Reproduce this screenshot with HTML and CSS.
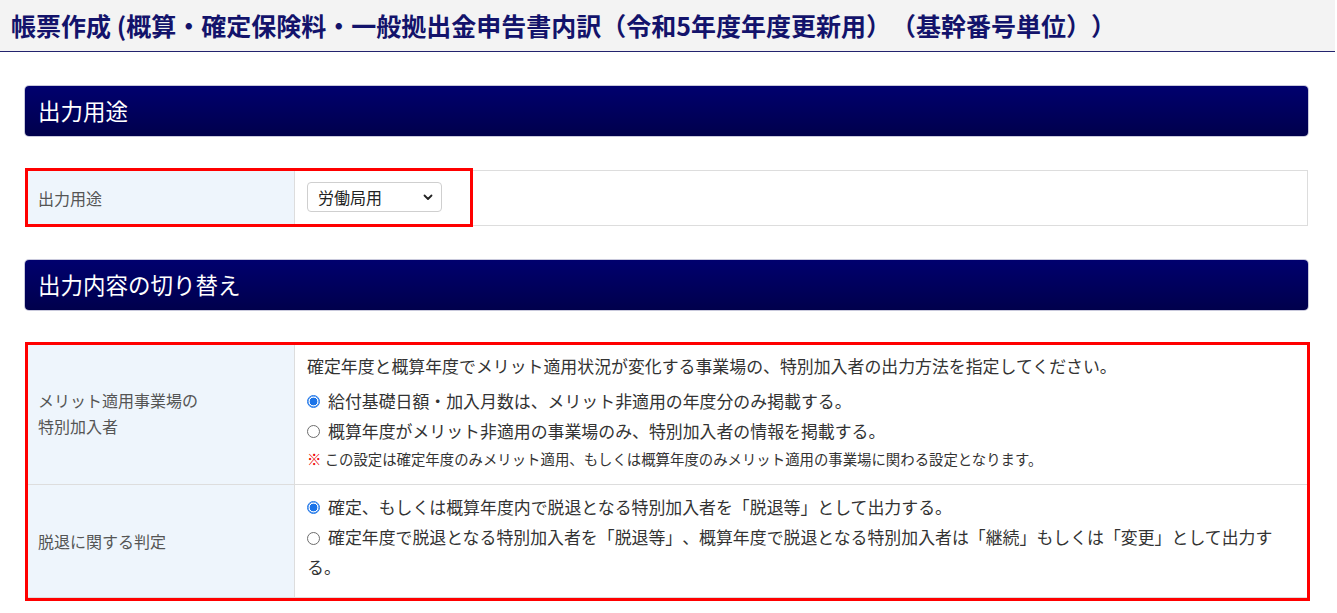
FILE: index.html
```html
<!DOCTYPE html>
<html lang="ja">
<head>
<meta charset="utf-8">
<title>帳票作成</title>
<link rel="stylesheet" href="styles.css">
</head>
<body>
<header class="page-header">
  <h1 class="page-title">帳票作成 (概算・確定保険料・一般拠出金申告書内訳（令和5年度年度更新用）（基幹番号単位））</h1>
</header>
<main class="content">
  <h2 class="section-bar">出力用途</h2>
  <div class="table-wrap">
    <table class="form-table form-table--single">
      <tr>
        <th class="label-cell">出力用途</th>
        <td class="value-cell">
          <div class="select-box">
            <span class="select-text">労働局用</span>
            <svg class="chevron" width="10" height="7" viewBox="0 0 10 7"><path d="M1.5 1.5 L5 5 L8.5 1.5" fill="none" stroke="#222" stroke-width="1.8" stroke-linecap="round" stroke-linejoin="round"/></svg>
          </div>
        </td>
      </tr>
    </table>
    <div class="highlight highlight--select"></div>
  </div>

  <h2 class="section-bar">出力内容の切り替え</h2>
  <div class="table-wrap">
    <table class="form-table">
      <tr>
        <th class="label-cell label-cell--tall">メリット適用事業場の<br>特別加入者</th>
        <td class="value-cell value-cell--row1">
          <p class="lead">確定年度と概算年度でメリット適用状況が変化する事業場の、特別加入者の出力方法を指定してください。</p>
          <div class="radio-line"><span class="radio radio--on"></span><span>給付基礎日額・加入月数は、メリット非適用の年度分のみ掲載する。</span></div>
          <div class="radio-line"><span class="radio"></span><span>概算年度がメリット非適用の事業場のみ、特別加入者の情報を掲載する。</span></div>
          <p class="note"><span class="note-mark">※</span> この設定は確定年度のみメリット適用、もしくは概算年度のみメリット適用の事業場に関わる設定となります。</p>
        </td>
      </tr>
      <tr>
        <th class="label-cell">脱退に関する判定</th>
        <td class="value-cell value-cell--row2">
          <div class="radio-line"><span class="radio radio--on"></span><span>確定、もしくは概算年度内で脱退となる特別加入者を「脱退等」として出力する。</span></div>
          <div class="radio-line radio-line--wrap"><span class="radio"></span><span class="radio-text">確定年度で脱退となる特別加入者を「脱退等」、概算年度で脱退となる特別加入者は「継続」もしくは「変更」として出力する。</span></div>
        </td>
      </tr>
    </table>
    <div class="highlight highlight--table"></div>
  </div>
</main>
</body>
</html>
```

FILE: styles.css
```css
* { box-sizing: border-box; }

html, body {
  margin: 0;
  padding: 0;
  background: #ffffff;
  font-family: "Noto Sans CJK JP", "Noto Sans", sans-serif;
  color: #333333;
  text-spacing-trim: space-all;
}

.page-header {
  height: 52px;
  background: #f3f3f3;
  border-bottom: 1px solid #23236e;
  width: 1335px;
  display: flex;
  align-items: center;
  padding-left: 11px;
  padding-bottom: 1px;
}

.page-title {
  margin: 0;
  font-size: 25px;
  font-weight: 700;
  color: #13136b;
  letter-spacing: 0;
  line-height: 1;
  white-space: nowrap;
}

.content {
  padding: 34px 29px 0 25px;
  width: 1337px;
}

.section-bar {
  margin: 0;
  height: 50px;
  background: linear-gradient(#00006e, #00004c);
  border-radius: 4px;
  color: #ffffff;
  font-size: 22.5px;
  font-weight: 400;
  display: flex;
  align-items: center;
  padding-left: 13px;
  padding-bottom: 3px;
  box-shadow: 0 0 0 1px #c9c9dc;
}

.table-wrap {
  position: relative;
  margin-top: 34px;
  margin-bottom: 34px;
}

.form-table {
  width: 100%;
  border-collapse: collapse;
  border: 1px solid #dddddd;
}

.form-table th,
.form-table td {
  border: 1px solid #dddddd;
}

.label-cell {
  width: 269px;
  background: #eef5fc;
  text-align: left;
  font-weight: 400;
  font-size: 16px;
  color: #555555;
  padding: 0 12px;
  line-height: 26px;
  vertical-align: middle;
}

.label-cell--tall {
  padding-bottom: 3px;
}

.value-cell {
  background: #ffffff;
  font-size: 16.9px;
  color: #333333;
  padding: 0 12px;
  vertical-align: middle;
}

.form-table--single td,
.form-table--single th {
  height: 55px;
}

.select-box {
  width: 135px;
  height: 30px;
  border: 1px solid #cfcfcf;
  border-radius: 4px;
  display: flex;
  align-items: center;
  justify-content: space-between;
  padding: 0 8px 0 10px;
  font-size: 16px;
  color: #222222;
  margin-top: -2px;
}

.chevron { display: block; }

.value-cell--row1 {
  height: 140px;
  padding-top: 5px;
  padding-bottom: 11px;
}

.value-cell--row2 {
  height: 113px;
  padding-top: 5px;
  padding-bottom: 13px;
}

.lead {
  margin: 0 0 5px 0;
  line-height: 30px;
}

.radio-line {
  display: flex;
  align-items: flex-start;
  line-height: 30px;
}

.radio-line--wrap {
  display: block;
  padding-right: 10px;
}

.radio {
  flex: none;
  display: inline-block;
  width: 13px;
  height: 13px;
  border-radius: 50%;
  border: 1px solid #6d6d6d;
  background: #fff;
  margin: 9px 8px 0 0;
  vertical-align: -1px;
}

.radio-line--wrap .radio {
  margin: 0 8px 0 0;
}

.radio--on {
  border: 1px solid #1a73e8;
  background: radial-gradient(circle, #1a73e8 0 3.6px, #ffffff 4.2px 100%);
  box-shadow: inset 0 0 0 0.5px #1a73e8;
}

.note {
  margin: 0;
  font-size: 14.4px;
  line-height: 26px;
  color: #333333;
}

.note-mark {
  color: #ee0000;
  font-weight: 700;
}

.highlight {
  position: absolute;
  border: 3px solid #ff0000;
  pointer-events: none;
}

.highlight--select {
  left: 0;
  top: -2px;
  width: 448px;
  height: 59px;
}

.highlight--table {
  left: 0;
  top: -2px;
  right: -2px;
  bottom: -3px;
}
```
